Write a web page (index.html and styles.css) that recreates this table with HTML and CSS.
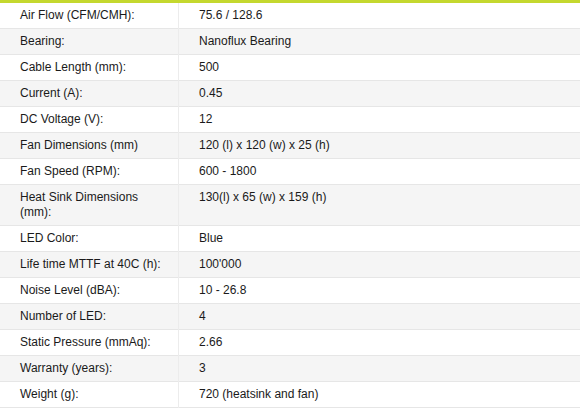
FILE: index.html
```html
<!DOCTYPE html>
<html>
<head>
<meta charset="utf-8">
<link rel="stylesheet" href="styles.css">
</head>
<body>
<table class="specs">
<tbody>
<tr><td class="label">Air Flow (CFM/CMH):</td><td class="value">75.6 / 128.6</td></tr>
<tr><td class="label">Bearing:</td><td class="value">Nanoflux Bearing</td></tr>
<tr><td class="label">Cable Length (mm):</td><td class="value">500</td></tr>
<tr><td class="label">Current (A):</td><td class="value">0.45</td></tr>
<tr><td class="label">DC Voltage (V):</td><td class="value">12</td></tr>
<tr><td class="label">Fan Dimensions (mm)</td><td class="value">120 (l) x 120 (w) x 25 (h)</td></tr>
<tr><td class="label">Fan Speed (RPM):</td><td class="value">600 - 1800</td></tr>
<tr><td class="label">Heat Sink Dimensions<br>(mm):</td><td class="value">130(l) x 65 (w) x 159 (h)</td></tr>
<tr><td class="label">LED Color:</td><td class="value">Blue</td></tr>
<tr><td class="label">Life time MTTF at 40C (h):</td><td class="value">100'000</td></tr>
<tr><td class="label">Noise Level (dBA):</td><td class="value">10 - 26.8</td></tr>
<tr><td class="label">Number of LED:</td><td class="value">4</td></tr>
<tr><td class="label">Static Pressure (mmAq):</td><td class="value">2.66</td></tr>
<tr><td class="label">Warranty (years):</td><td class="value">3</td></tr>
<tr><td class="label">Weight (g):</td><td class="value">720 (heatsink and fan)</td></tr>
</tbody>
</table>
</body>
</html>
```
FILE: styles.css
```css
html, body {
  margin: 0;
  padding: 0;
  background: #ffffff;
}
.specs {
  width: 580px;
  border-collapse: collapse;
  border-spacing: 0;
  border-top: 3px solid #c4d82e;
  font-family: "Liberation Sans", Arial, sans-serif;
  font-size: 12px;
  line-height: 15px;
  color: #1a1a1a;
}
.specs tr {
  border-bottom: 1px solid #e6e6e6;
}
.specs tr:nth-child(even) {
  background: #f5f5f5;
}
.specs td {
  padding: 5px 20px 5px 20px;
  vertical-align: top;
  text-align: left;
}
.specs .label {
  width: 156px;
  padding-right: 2px;
  white-space: nowrap;
  border-right: 1px solid #ececec;
}
```
